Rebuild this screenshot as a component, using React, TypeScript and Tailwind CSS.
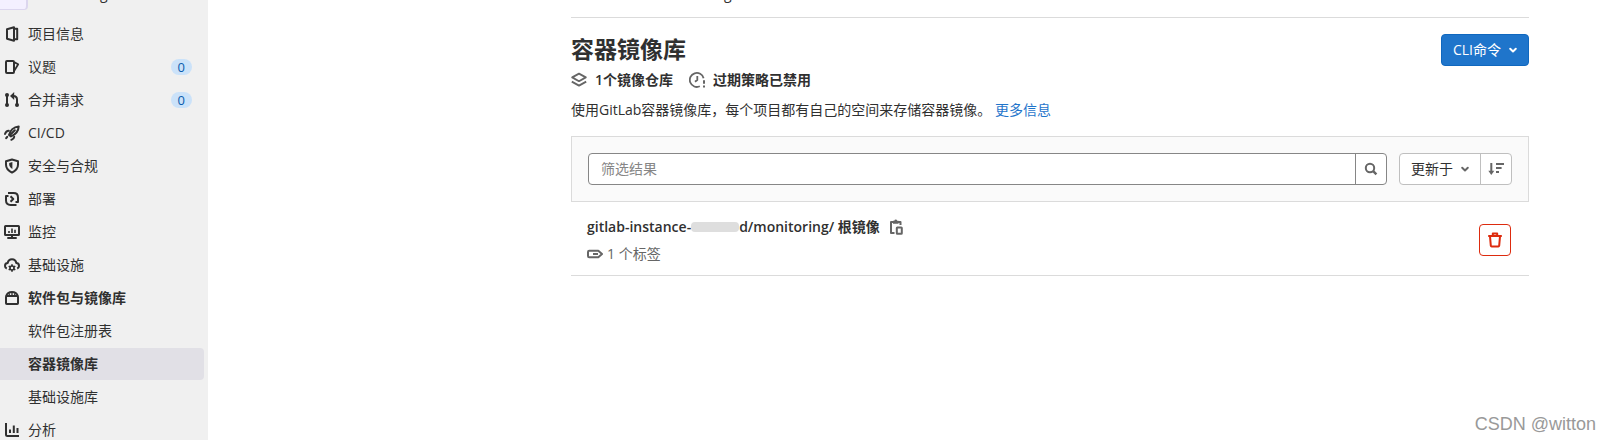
import type { ReactNode } from "react";

type IconProps = { children: ReactNode; className?: string };

function Icon({ children, className = "" }: IconProps) {
  return (
    <svg
      viewBox="0 0 16 16"
      aria-hidden="true"
      className={`size-4 shrink-0 ${className}`}
      fill="none"
      stroke="currentColor"
      strokeWidth="2"
      strokeLinejoin="round"
    >
      {children}
    </svg>
  );
}

const ProjectIcon = () => (
  <Icon>
    <path d="M3 3.200 10 1.300v13.400L3 12.800zM10 2.800H13.200v10.400H10" />
  </Icon>
);
const IssuesIcon = () => (
  <Icon>
    <rect x="2" y="2" width="8" height="12" rx="1" />
    <path d="M10.500 3.400 14.200 5.200l-3.800 6.400" strokeWidth="1.800" />
  </Icon>
);
const MergeIcon = () => (
  <Icon>
    <path d="M3 3v10M7.500 4h1.800C11.700 4 13 5.300 13 7.500V13" />
    <path d="M10.200 0 6 4l4.200 4z" fill="currentColor" stroke="none" />
    <circle cx="3" cy="3" r="2" fill="currentColor" stroke="none" />
    <circle cx="3" cy="13" r="2" fill="currentColor" stroke="none" />
    <circle cx="13" cy="13" r="2" fill="currentColor" stroke="none" />
  </Icon>
);
const RocketIcon = () => (
  <Icon>
    <path d="M5 10C6 5.600 9.600 1.800 14.700 1.400c-.2 5-3.700 8.300-7.700 10z" />
    <path
      d="M10.800 5.200 6 10M4.800 5.800C3 5.700 1.700 6.900 1 9M10.200 11.800c-.1 1.300-1 2.200-2.800 3M3.200 11.800l-1 1.400"
      strokeLinecap="round"
    />
  </Icon>
);
const ShieldIcon = () => (
  <Icon>
    <path d="M8 1.500 14 3.300v3.500c0 3.600-2.200 5.900-6 7.800-3.800-1.900-6-4.200-6-7.800V3.300z" />
    <path d="M8.400 4v7C6.200 9.700 5.200 8.300 5.200 6.600V4.900z" fill="currentColor" stroke="none" />
  </Icon>
);
const DeployIcon = () => (
  <Icon>
    <path d="M4 2h5.500C12.300 2 14 3.700 14 6.400V11h-2.500M12.500 14h-6C3.700 14 2 12.300 2 9.600V5h2.500" />
    <path d="m6.500 5.200 2.800 2.800-2.800 2.800" />
  </Icon>
);
const MonitorIcon = () => (
  <Icon>
    <rect x="1" y="2" width="14" height="9" rx=".6" />
    <path d="M8 11v3M3.300 14h9.400" />
    <path d="M5 7v2M8 4.600V9M11 5.800V9" strokeWidth="1.600" />
  </Icon>
);
const CloudIcon = () => (
  <Icon>
    <path d="M2.800 11.500C1.600 11 1 10 1 8.900 1 7.300 2.200 6.100 3.700 6 4.100 3.700 5.800 2.200 8 2.200S11.900 3.700 12.300 6C13.800 6.100 15 7.300 15 8.900c0 1.100-.6 2.100-1.800 2.600" />
    <circle cx="8" cy="11" r="2" strokeWidth="1.600" />
    <path
      d="M8 7.200V9M8 13v1.800M4.700 9.100l1.600.9M9.700 12l1.600.9M4.700 12.900l1.600-.9M9.700 10l1.600-.9"
      strokeWidth="1.600"
    />
  </Icon>
);
const PackageIcon = () => (
  <Icon>
    <rect x="2" y="6" width="12" height="8" rx=".8" />
    <path d="M2.200 6C3 3.300 5 2 8 2s5 1.300 5.800 4" />
    <path d="M8 2v4M5 3l.5 3M11 3l-.5 3" strokeWidth="1.300" />
  </Icon>
);
const ChartIcon = () => (
  <Icon>
    <path d="M2 1v11.500c0 .9.600 1.500 1.500 1.500H15M6 7.500V11M9.800 3.500V11M13.500 6V11" />
  </Icon>
);
const ChevronIcon = () => (
  <Icon>
    <path d="m5.200 6.800 2.800 2.700 2.800-2.700" strokeLinecap="round" />
  </Icon>
);
const LayersIcon = () => (
  <Icon className="text-[#666]">
    <path d="M8 1.600 14.800 5.400 8 9.200 1.200 5.400z" strokeWidth="1.800" />
    <path d="M.8 9.600 8 13.600l7.200-4" strokeWidth="1.800" />
  </Icon>
);
const ExpirationIcon = () => (
  <Icon className="text-[#666]">
    <path d="M10.800 14.300A7 7 0 1 1 14.600 6.200M8.300 4v4L6 9.800" strokeWidth="1.800" />
    <path d="M15 8.200v3.600M15 13.600v2" strokeWidth="2" />
  </Icon>
);
const SearchIcon = () => (
  <Icon className="text-[#666]">
    <circle cx="7" cy="7" r="4.200" />
    <path d="m10.200 10.200 3.200 3.200" strokeWidth="2.400" />
  </Icon>
);
const SortIcon = () => (
  <Icon className="text-[#666]">
    <path d="M3.300 2v10M8 3h8M8 7h5.600M8 11h3" />
    <path d="M.3 9.800h6L3.300 14z" fill="currentColor" stroke="none" />
  </Icon>
);
const TrashIcon = () => (
  <Icon>
    <path d="M1.200 4h13.600M5.800 3.600V1.400h4.400v2.200M3 4.400l.8 9.200c.1.600.4.900.9.900h6.600c.5 0 .8-.3.900-.9l.8-9.200" />
  </Icon>
);
const CopyIcon = () => (
  <Icon>
    <path d="M6.500 14H3V3h2.500M10 3h2.500v3" />
    <path d="M5 1.700h1.300a1.500 1.500 0 0 1 2.900 0h1.300v3.100H5z" fill="currentColor" stroke="none" />
    <rect x="8.800" y="8.500" width="5" height="6.300" rx=".5" />
  </Icon>
);
const LabelIcon = () => (
  <Icon>
    <path d="M2.200 4.700h9.100L15 8l-3.700 3.300H2.200C1.400 11.300 1 10.800 1 10V6c0-.8.400-1.300 1.200-1.300z" />
    <path d="M6 8H11" />
  </Icon>
);

type NavItem = {
  label: string;
  icon?: ReactNode;
  count?: number;
  bold?: boolean;
  active?: boolean;
};

const navItems: NavItem[] = [
  { label: "项目信息", icon: <ProjectIcon /> },
  { label: "议题", icon: <IssuesIcon />, count: 0 },
  { label: "合并请求", icon: <MergeIcon />, count: 0 },
  { label: "CI/CD", icon: <RocketIcon /> },
  { label: "安全与合规", icon: <ShieldIcon /> },
  { label: "部署", icon: <DeployIcon /> },
  { label: "监控", icon: <MonitorIcon /> },
  { label: "基础设施", icon: <CloudIcon /> },
  { label: "软件包与镜像库", icon: <PackageIcon />, bold: true },
  { label: "软件包注册表" },
  { label: "容器镜像库", bold: true, active: true },
  { label: "基础设施库" },
  { label: "分析", icon: <ChartIcon /> },
];

function Sidebar() {
  return (
    <aside className="h-screen w-52 shrink-0 overflow-hidden bg-[#f0f0f0]">
      <div className="flex h-[18px] items-start overflow-hidden">
        <div className="h-[10px] w-7 rounded-br border-r-2 border-b border-[#dcd6ee] bg-[#f4f0ff]" />
        <span className="-mt-[14px] ml-[72px] text-sm leading-4">g</span>
      </div>
      <nav className="flex flex-col gap-px pr-1">
        {navItems.map((item) => (
          <a
            key={item.label}
            href="#"
            aria-current={item.active ? "page" : undefined}
            className={`flex h-8 shrink-0 items-center gap-2 rounded-r pr-3 pl-1 ${item.active ? "bg-[#e1e0e6]" : ""} ${item.bold ? "font-semibold" : ""}`}
          >
            {item.icon ?? <span className="w-4" />}
            <span className="flex-1">{item.label}</span>
            {item.count !== undefined && (
              <span className="rounded-full bg-[#cbe2f9] px-[7px] text-[13px] leading-4 text-[#0b5cad]">
                {item.count}
              </span>
            )}
          </a>
        ))}
      </nav>
    </aside>
  );
}

export default function App() {
  return (
    <div className="flex min-h-screen overflow-hidden bg-white font-['Open_Sans','Noto_Sans_CJK_SC',sans-serif] text-sm leading-5 text-[#303030]">
      <Sidebar />
      <main className="mr-[82px] ml-[363px] min-w-0 flex-1">
        <div className="h-[18px] overflow-hidden border-b border-[#dbdbdb]">
          <span className="-mt-[14px] ml-[153px] block leading-4">g</span>
        </div>

        <header className="flex items-start justify-between pt-4">
          <div>
            <h1 className="text-[23px] leading-[30px] font-bold">容器镜像库</h1>
            <div className="mt-1 flex items-center gap-4 leading-6 font-semibold">
              <span className="flex items-center gap-2">
                <LayersIcon />
                1个镜像仓库
              </span>
              <span className="flex items-center gap-2">
                <ExpirationIcon />
                过期策略已禁用
              </span>
            </div>
            <p className="mt-2">
              使用GitLab容器镜像库，每个项目都有自己的空间来存储容器镜像。{" "}
              <a href="#" className="text-[#1f75cb]">
                更多信息
              </a>
            </p>
          </div>
          <button
            type="button"
            className="flex h-8 items-center gap-1 rounded border border-[#1068bf] bg-[#1f75cb] pr-[7px] pl-[11px] text-white"
          >
            CLI命令
            <ChevronIcon />
          </button>
        </header>

        <section className="mt-4 flex gap-3 border border-[#dbdbdb] bg-[#fafafa] p-4">
          <div className="flex h-8 flex-1 overflow-hidden rounded border border-[#868686] bg-white">
            <input
              type="text"
              aria-label="筛选结果"
              placeholder="筛选结果"
              className="min-w-0 flex-1 px-3 outline-none placeholder:text-[#868686]"
            />
            <button
              type="button"
              aria-label="搜索"
              className="flex w-[31px] items-center justify-center border-l border-[#868686]"
            >
              <SearchIcon />
            </button>
          </div>
          <div className="flex h-8 rounded border border-[#bfbfbf] bg-white">
            <button type="button" className="flex items-center gap-1 pr-[7px] pl-[11px]">
              更新于
              <span className="text-[#666]">
                <ChevronIcon />
              </span>
            </button>
            <button
              type="button"
              aria-label="排序方向"
              className="flex w-[31px] items-center justify-center border-l border-[#bfbfbf]"
            >
              <SortIcon />
            </button>
          </div>
        </section>

        <section className="flex items-center justify-between border-b border-[#dbdbdb] pt-[11px] pr-[18px] pb-2 pl-4">
          <div>
            <div className="flex h-7 items-center font-semibold">
              <span>gitlab-instance-</span>
              <span className="h-[10px] w-12 rounded bg-[#dedede]" />
              <span>d/monitoring/ 根镜像</span>
              <button type="button" aria-label="复制" className="ml-2 text-[#666]">
                <CopyIcon />
              </button>
            </div>
            <div className="flex h-[26px] items-center gap-1 text-[#666]">
              <LabelIcon />
              1 个标签
            </div>
          </div>
          <button
            type="button"
            aria-label="删除"
            className="flex size-8 items-center justify-center rounded border border-[#dd2b0e] bg-white text-[#dd2b0e]"
          >
            <TrashIcon />
          </button>
        </section>
      </main>
      <div className="absolute right-[15px] bottom-1 font-['Liberation_Sans',sans-serif] text-lg leading-6 text-[#999]">
        CSDN @witton
      </div>
    </div>
  );
}
